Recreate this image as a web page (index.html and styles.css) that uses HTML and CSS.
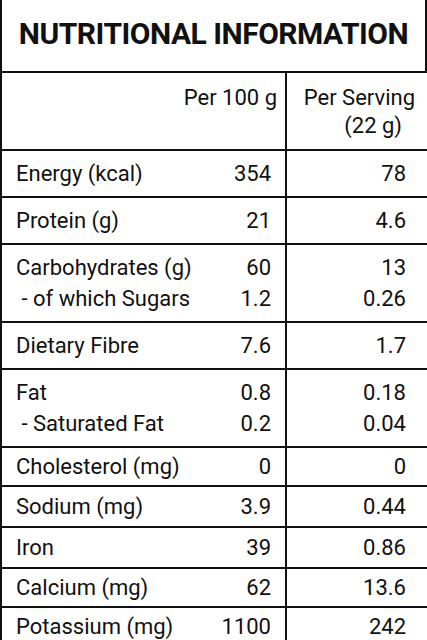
FILE: index.html
```html
<!DOCTYPE html>
<html>
<head>
  <title>Nutritional Information</title>
  <link rel="stylesheet" href="styles.css">
</head>
<body>

  <!-- Label panel -->
  <div class="panel">
    <h1 class="title">NUTRITIONAL INFORMATION</h1>

    <table class="facts">
      <colgroup>
        <col class="col-name">
        <col class="col-100">
        <col class="col-serving">
      </colgroup>
      <tr class="head">
        <td class="name"></td>
        <td class="num">Per 100 g</td>
        <td class="serv">
          <span class="line">Per Serving</span>
          <span class="line sub">(22 g)</span>
        </td>
      </tr>
      <tr>
        <td class="name">Energy (kcal)</td>
        <td class="num">354</td>
        <td class="serv">78</td>
      </tr>
      <tr>
        <td class="name">Protein (g)</td>
        <td class="num">21</td>
        <td class="serv">4.6</td>
      </tr>
      <tr>
        <td class="name">Carbohydrates (g)<br>&nbsp;- of which Sugars</td>
        <td class="num">60<br>1.2</td>
        <td class="serv">13<br>0.26</td>
      </tr>
      <tr>
        <td class="name">Dietary Fibre</td>
        <td class="num">7.6</td>
        <td class="serv">1.7</td>
      </tr>
      <tr>
        <td class="name">Fat<br>&nbsp;- Saturated Fat</td>
        <td class="num">0.8<br>0.2</td>
        <td class="serv">0.18<br>0.04</td>
      </tr>
      <tr class="snug">
        <td class="name">Cholesterol (mg)</td>
        <td class="num">0</td>
        <td class="serv">0</td>
      </tr>
      <tr class="tight">
        <td class="name">Sodium (mg)</td>
        <td class="num">3.9</td>
        <td class="serv">0.44</td>
      </tr>
      <tr class="tight">
        <td class="name">Iron</td>
        <td class="num">39</td>
        <td class="serv">0.86</td>
      </tr>
      <tr class="snug">
        <td class="name">Calcium (mg)</td>
        <td class="num">62</td>
        <td class="serv">13.6</td>
      </tr>
      <tr class="snug">
        <td class="name">Potassium (mg)</td>
        <td class="num">1100</td>
        <td class="serv">242</td>
      </tr>
    </table>
  </div>

</body>
</html>
```

FILE: styles.css
```css
body {
  margin: 0;
  background: #fff;
  color: #111;
  font-family: Roboto, "Liberation Sans", sans-serif;
  overflow: hidden;
}

.panel {
  width: 427px;
}

.title {
  margin: 0;
  height: 71px;
  line-height: 67px;
  border-left: 2px solid #111;
  border-right: 2px solid #111;
  box-sizing: border-box;
  text-align: center;
  font-size: 30px;
  font-weight: 700;
  letter-spacing: -0.5px;
}

/* Table */
.facts {
  width: 427px;
  border-collapse: collapse;
  table-layout: fixed;
  font-size: 22px;
  line-height: 31px;
}

.col-name { width: 180px; }
.col-100 { width: 105px; }
.col-serving { width: 142px; }

.facts td {
  border: 2px solid #111;
  padding-top: 7px;
  padding-bottom: 7px;
  vertical-align: middle;
  white-space: nowrap;
}

.facts .name {
  border-right: none;
  padding-left: 14px;
}

.facts .num {
  border-left: none;
  text-align: right;
  padding-right: 14px;
}

.facts .serv {
  text-align: right;
  padding-right: 21px;
}

/* shorter rows at the bottom of the label */
.facts .tight td {
  padding-top: 4px;
  padding-bottom: 4px;
}

.facts .snug td {
  padding-top: 3px;
  padding-bottom: 3px;
}

/* Header row */
.head td {
  vertical-align: top;
  padding: 11px 0 9px;
  line-height: 28px;
}

.head .num { padding-right: 8px; }

.head .serv {
  padding-right: 12px;
}

.line {
  display: block;
}

.line.sub {
  padding-right: 13px;
}
```
